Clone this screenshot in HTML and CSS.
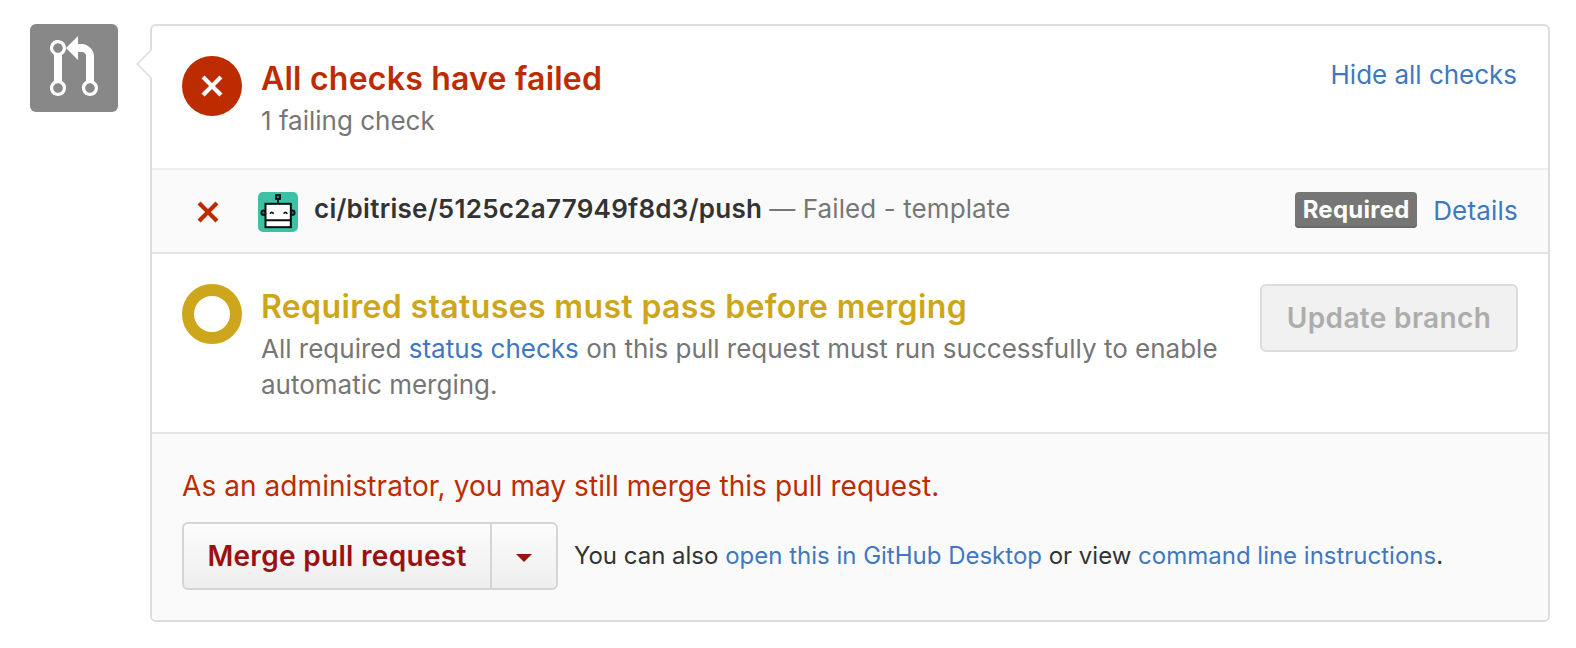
FILE: index.html
```html
<!DOCTYPE html>
<html lang="en">
<head>
<meta charset="utf-8">
<title>Merge pull request</title>
<link rel="stylesheet" href="styles.css">
</head>
<body>
<main class="discussion">
  <div class="avatar">
    <svg class="avatar-icon" viewBox="0 0 12 16" aria-hidden="true"><path d="M11 11.28V5c-.03-.78-.34-1.47-.94-2.06C9.46 2.35 8.78 2.03 8 2H7V0L4 3l3 3V4h1c.27.02.48.11.69.31.21.2.3.42.31.69v6.28A1.993 1.993 0 0 0 10 15a1.993 1.993 0 0 0 1-3.72zm-1 2.92c-.66 0-1.2-.55-1.2-1.2 0-.65.55-1.2 1.2-1.2.65 0 1.2.55 1.2 1.2 0 .65-.55 1.2-1.2 1.2zM4 3c0-1.11-.89-2-2-2a1.993 1.993 0 0 0-1 3.72v6.56A1.993 1.993 0 0 0 2 15a1.993 1.993 0 0 0 1-3.72V4.72c.59-.34 1-.98 1-1.72zm-.8 10c0 .66-.55 1.2-1.2 1.2-.65 0-1.2-.55-1.2-1.2 0-.65.55-1.2 1.2-1.2.65 0 1.2.55 1.2 1.2zM2 4.2C1.34 4.2.8 3.65.8 3c0-.65.55-1.2 1.2-1.2.65 0 1.2.55 1.2 1.2 0 .65-.55 1.2-1.2 1.2z"/></svg>
  </div>

  <div class="merge-box">
    <svg class="pointer" viewBox="0 0 16 30" aria-hidden="true"><path class="pointer-fill" d="M16 0.5L1 15l15 14.500z"/><path class="pointer-line" d="M15 1.200L1.200 15 15 28.800"/></svg>

    <section class="section">
      <div class="status status-failed">
        <svg class="x-icon" viewBox="0 0 12 16" aria-hidden="true"><path d="M7.48 8l3.75 3.75-1.48 1.48L6 9.48l-3.75 3.75-1.48-1.48L4.52 8 .77 4.25l1.48-1.48L6 6.52l3.75-3.75 1.48 1.48z"/></svg>
      </div>
      <div class="section-text">
        <h2 class="heading heading-failed">All checks have failed</h2>
        <p class="meta">1 failing check</p>
      </div>
      <a class="link toggle-link">Hide all checks</a>
    </section>

    <div class="check">
      <svg class="x-icon check-x" viewBox="0 0 12 16" aria-hidden="true"><path d="M7.48 8l3.75 3.75-1.48 1.48L6 9.48l-3.75 3.75-1.48-1.48L4.52 8 .77 4.25l1.48-1.48L6 6.52l3.75-3.75 1.48 1.48z"/></svg>
      <svg class="robot" viewBox="0 0 120 120" aria-hidden="true">
        <rect width="120" height="120" fill="#3dc0a4"/>
        <g stroke="#0b0f0e" stroke-width="6" fill="#fff">
          <circle cx="17" cy="62" r="6.500" fill="#3b8577"/>
          <circle cx="103" cy="62" r="6.500" fill="#3b8577"/>
          <path d="M60 22v13" stroke-width="5"/>
          <rect x="54" y="9" width="12" height="12" fill="#3b8577" stroke-width="5.500"/>
          <rect x="22.500" y="35.500" width="76" height="70"/>
          <path d="M22 85h77"/>
          <path d="M36 65q5-8 11 0M77 65q5-8 11 0" fill="none" stroke-width="5"/>
        </g>
      </svg>
      <div class="check-text"><strong class="check-name">ci/bitrise/5125c2a77949f8d3/push</strong><span class="check-desc">— Failed - template</span></div>
      <span class="badge">Required</span>
      <a class="link details-link">Details</a>
    </div>

    <section class="section section-pending">
      <div class="status status-pending"></div>
      <div class="section-text">
        <h2 class="heading heading-pending">Required statuses must pass before merging</h2>
        <p class="meta">All required <a class="link">status checks</a> on this pull request must run successfully to enable<br>automatic merging.</p>
      </div>
      <button class="update-button" disabled>Update branch</button>
    </section>

    <section class="merge-area">
      <p class="admin-note">As an administrator, you may still merge this pull request.</p>
      <div class="merge-row">
        <div class="button-group">
          <button class="merge-button">Merge pull request</button>
          <button class="merge-button caret-button" aria-label="Select merge method"><svg class="caret" viewBox="0 0 16 8" aria-hidden="true"><path d="M0 0h16L8 8z"/></svg></button>
        </div>
        <p class="merge-help">You can also <a class="link">open this in GitHub Desktop</a> or view <a class="link">command line instructions</a>.</p>
      </div>
    </section>
  </div>
</main>
</body>
</html>
```
FILE: styles.css
```css
* { box-sizing: border-box; }

body {
  margin: 0;
  background: #fff;
  color: #333;
  font-family: Inter, "Liberation Sans", sans-serif;
  font-size: 26px;
  line-height: 36px;
}

h2, p { margin: 0; }
svg { display: block; flex: none; }
button { font-family: inherit; padding: 0; }

.discussion {
  display: flex;
  align-items: flex-start;
  gap: 32px;
  padding: 24px 26px 0 30px;
}

.avatar {
  flex: none;
  width: 88px;
  height: 88px;
  padding: 12px 20px;
  border-radius: 6px;
  background: #888;
}
.avatar-icon { width: 48px; height: 64px; fill: #fff; }

.merge-box {
  position: relative;
  flex: 1;
  border: 2px solid #ddd;
  border-radius: 6px;
}
.pointer {
  position: absolute;
  top: 23px;
  left: -16px;
  width: 16px;
  height: 30px;
}
.pointer-fill { fill: #fff; }
.pointer-line { fill: none; stroke: #ddd; stroke-width: 1.600; }

.link { color: #4078c0; }

.section {
  display: flex;
  align-items: flex-start;
  height: 142px;
  padding: 30px;
}
.section-pending {
  height: 182px;
  border-top: 2px solid #e5e5e5;
}

.status {
  display: flex;
  align-items: center;
  justify-content: center;
  flex: none;
  width: 60px;
  height: 60px;
  border-radius: 50%;
}
.status-failed { background: #bd2c00; }
.status-pending { border: 12px solid #cea61b; }
.x-icon { width: 24px; height: 32px; fill: #bd2c00; }
.status-failed .x-icon { fill: #fff; }

.section-text { flex: 1; padding: 4px 0 0 19px; white-space: nowrap; }
.heading {
  margin-bottom: 5.5px;
  font-size: 32px;
  font-weight: 600;
  line-height: 37px;
}
.heading-failed { color: #bd2c00; letter-spacing: 0.225px; }
.heading-pending { color: #cea61b; letter-spacing: 0.365px; }
.meta { color: #767676; }
.toggle-link { padding-top: 0.5px; margin-right: 1px; letter-spacing: -0.02px; }

.check {
  display: flex;
  align-items: flex-start;
  height: 84px;
  padding: 22px 30px 0 44px;
  border-top: 2px solid #eee;
  background: #fafafa;
}
.check-x { margin-top: 4px; }
.robot { width: 40px; height: 40px; margin-left: 38px; border-radius: 5px; }
.check-text {
  flex: 1;
  display: flex;
  gap: 7px;
  margin: -1.5px 0 0 16px;
  white-space: nowrap;
}
.check-name { font-weight: 600; letter-spacing: 0.27px; }
.check-desc { color: #767676; letter-spacing: 0.1px; }
.badge {
  width: 122px;
  height: 36px;
  margin-right: 16px;
  border-radius: 4px;
  background: #767676;
  box-shadow: inset 0 -2px 0 #6a6a6a;
  color: #fff;
  font-size: 24px;
  font-weight: 700;
  letter-spacing: 0.25px;
  line-height: 35px;
  text-align: center;
}
.details-link { padding-top: 0.5px; letter-spacing: 0.2px; }

.update-button {
  width: 258px;
  height: 68px;
  border: 2px solid #dcdcdc;
  border-radius: 6px;
  background: #f1f1f1;
  color: #adadad;
  font-size: 28px;
  font-weight: 600;
  letter-spacing: 0.34px;
}

.merge-area {
  height: 186px;
  padding: 34px 30px 30px;
  border-radius: 0 0 4px 4px;
  background: #fafafa;
  box-shadow: 0 -2px 0 #e5e5e5;
}
.admin-note {
  margin-bottom: 18px;
  color: #bd2c00;
  font-size: 28px;
  letter-spacing: 0.07px;
}
.merge-row { display: flex; align-items: center; gap: 16px; }
.button-group { display: flex; }
.merge-button {
  width: 310px;
  height: 68px;
  border: 2px solid #d5d5d5;
  border-radius: 6px 0 0 6px;
  background: linear-gradient(#fcfcfc, #eee);
  color: #911;
  font-size: 28px;
  font-weight: 600;
  letter-spacing: 0.3px;
}
.caret-button {
  display: flex;
  align-items: center;
  justify-content: center;
  width: 66px;
  padding-top: 4px;
  border-left: 0;
  border-radius: 0 6px 6px 0;
}
.caret { width: 16px; height: 8px; fill: #911; }
.merge-help { margin-top: -1px; font-size: 24px; letter-spacing: -0.005px; white-space: nowrap; }
```
